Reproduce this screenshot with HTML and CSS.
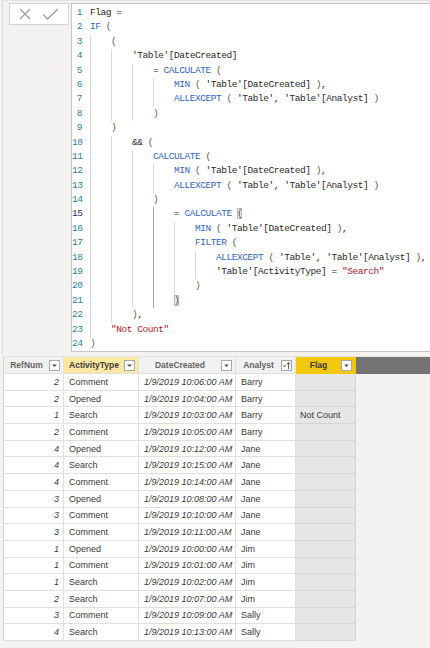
FILE: index.html
```html
<!DOCTYPE html>
<html>
<head>
<meta charset="utf-8">
<link rel="stylesheet" href="styles.css">
</head>
<body>
<div class="top">
  <div class="icons">
    <svg width="12" height="12" viewBox="0 0 12 12" class="ic-x"><path d="M1 1 L11 11 M11 1 L1 11" stroke="#9c9c9c" stroke-width="1.3" fill="none"/></svg>
    <svg width="17" height="12" viewBox="0 0 17 12" class="ic-ok"><path d="M1 6.5 L5.5 11 L16 1" stroke="#9c9c9c" stroke-width="1.3" fill="none"/></svg>
  </div>
  <div class="editor">
    <div class="ln"><span class="n">1</span><span class="c">Flag =</span></div>
    <div class="ln"><span class="n">2</span><span class="c"><span class="k">IF</span> <span class="p">(</span></span></div>
    <div class="ln"><span class="n">3</span><span class="c"><i class="g"></i><span class="p">(</span></span></div>
    <div class="ln"><span class="n">4</span><span class="c"><i class="g"></i><i class="g"></i>'Table'[DateCreated]</span></div>
    <div class="ln"><span class="n">5</span><span class="c"><i class="g"></i><i class="g"></i><i class="g"></i>= <span class="k">CALCULATE</span> <span class="p">(</span></span></div>
    <div class="ln"><span class="n">6</span><span class="c"><i class="g"></i><i class="g"></i><i class="g"></i><i class="g"></i><span class="k">MIN</span> <span class="p">(</span> 'Table'[DateCreated] <span class="p">)</span>,</span></div>
    <div class="ln"><span class="n">7</span><span class="c"><i class="g"></i><i class="g"></i><i class="g"></i><i class="g"></i><span class="k">ALLEXCEPT</span> <span class="p">(</span> 'Table', 'Table'[Analyst] <span class="p">)</span></span></div>
    <div class="ln"><span class="n">8</span><span class="c"><i class="g"></i><i class="g"></i><i class="g"></i><span class="p">)</span></span></div>
    <div class="ln"><span class="n">9</span><span class="c"><i class="g"></i><span class="p">)</span></span></div>
    <div class="ln"><span class="n">10</span><span class="c"><i class="g"></i><i class="g"></i>&amp;&amp; <span class="p">(</span></span></div>
    <div class="ln"><span class="n">11</span><span class="c"><i class="g"></i><i class="g"></i><i class="g"></i><span class="k">CALCULATE</span> <span class="p">(</span></span></div>
    <div class="ln"><span class="n">12</span><span class="c"><i class="g"></i><i class="g"></i><i class="g"></i><i class="g"></i><span class="k">MIN</span> <span class="p">(</span> 'Table'[DateCreated] <span class="p">)</span>,</span></div>
    <div class="ln"><span class="n">13</span><span class="c"><i class="g"></i><i class="g"></i><i class="g"></i><i class="g"></i><span class="k">ALLEXCEPT</span> <span class="p">(</span> 'Table', 'Table'[Analyst] <span class="p">)</span></span></div>
    <div class="ln"><span class="n">14</span><span class="c"><i class="g"></i><i class="g"></i><i class="g"></i><span class="p">)</span></span></div>
    <div class="ln cur"><span class="n">15</span><span class="c"><i class="g"></i><i class="g"></i><i class="g"></i><i class="g ga"></i>= <span class="k">CALCULATE</span> <span class="bm">(</span></span></div>
    <div class="ln"><span class="n">16</span><span class="c"><i class="g"></i><i class="g"></i><i class="g"></i><i class="g ga"></i><i class="g"></i><span class="k">MIN</span> <span class="p">(</span> 'Table'[DateCreated] <span class="p">)</span>,</span></div>
    <div class="ln"><span class="n">17</span><span class="c"><i class="g"></i><i class="g"></i><i class="g"></i><i class="g ga"></i><i class="g"></i><span class="k">FILTER</span> <span class="p">(</span></span></div>
    <div class="ln"><span class="n">18</span><span class="c"><i class="g"></i><i class="g"></i><i class="g"></i><i class="g ga"></i><i class="g"></i><i class="g"></i><span class="k">ALLEXCEPT</span> <span class="p">(</span> 'Table', 'Table'[Analyst] <span class="p">)</span>,</span></div>
    <div class="ln"><span class="n">19</span><span class="c"><i class="g"></i><i class="g"></i><i class="g"></i><i class="g ga"></i><i class="g"></i><i class="g"></i>'Table'[ActivityType] = <span class="s">"Search"</span></span></div>
    <div class="ln"><span class="n">20</span><span class="c"><i class="g"></i><i class="g"></i><i class="g"></i><i class="g ga"></i><i class="g"></i><span class="p">)</span></span></div>
    <div class="ln"><span class="n">21</span><span class="c"><i class="g"></i><i class="g"></i><i class="g"></i><i class="g ga"></i><span class="bm">)</span></span></div>
    <div class="ln"><span class="n">22</span><span class="c"><i class="g"></i><i class="g"></i><span class="p">)</span>,</span></div>
    <div class="ln"><span class="n">23</span><span class="c"><i class="g"></i><span class="s">"Not Count"</span></span></div>
    <div class="ln"><span class="n">24</span><span class="c"><span class="p">)</span></span></div>
  </div>
</div>

<div class="table">
  <div class="row head">
    <div class="hc w1"><span class="ht">RefNum</span><span class="dd"><svg width="9" height="9" viewBox="0 0 9 9"><path d="M2 3.5 H7 L4.5 6 Z" fill="#555"/></svg></span></div>
    <div class="hc w2 sel"><span class="ht">ActivityType</span><span class="dd"><svg width="9" height="9" viewBox="0 0 9 9"><path d="M2 3.5 H7 L4.5 6 Z" fill="#555"/></svg></span></div>
    <div class="hc w3"><span class="ht">DateCreated</span><span class="dd"><svg width="9" height="9" viewBox="0 0 9 9"><path d="M2 3.5 H7 L4.5 6 Z" fill="#555"/></svg></span></div>
    <div class="hc w4"><span class="ht">Analyst</span><span class="dd"><svg width="9" height="9" viewBox="0 0 9 9"><path d="M0.8 4.5 H4 L2.4 6.2 Z" fill="#555"/><path d="M6.5 8 V1.5 M4.8 3.3 L6.5 1.5 L8.2 3.3" stroke="#555" stroke-width="0.9" fill="none"/></svg></span></div>
    <div class="hc w5 flag"><span class="ht">Flag</span><span class="dd"><svg width="9" height="9" viewBox="0 0 9 9"><path d="M2 3.5 H7 L4.5 6 Z" fill="#555"/></svg></span></div>
    <div class="fill"></div>
  </div>
  <div class="row"><div class="cl w1 num">2</div><div class="cl w2">Comment</div><div class="cl w3 dt">1/9/2019 10:06:00 AM</div><div class="cl w4">Barry</div><div class="cl w5 fl"></div></div>
  <div class="row"><div class="cl w1 num">2</div><div class="cl w2">Opened</div><div class="cl w3 dt">1/9/2019 10:04:00 AM</div><div class="cl w4">Barry</div><div class="cl w5 fl"></div></div>
  <div class="row"><div class="cl w1 num">1</div><div class="cl w2">Search</div><div class="cl w3 dt">1/9/2019 10:03:00 AM</div><div class="cl w4">Barry</div><div class="cl w5 fl">Not Count</div></div>
  <div class="row"><div class="cl w1 num">2</div><div class="cl w2">Comment</div><div class="cl w3 dt">1/9/2019 10:05:00 AM</div><div class="cl w4">Barry</div><div class="cl w5 fl"></div></div>
  <div class="row"><div class="cl w1 num">4</div><div class="cl w2">Opened</div><div class="cl w3 dt">1/9/2019 10:12:00 AM</div><div class="cl w4">Jane</div><div class="cl w5 fl"></div></div>
  <div class="row"><div class="cl w1 num">4</div><div class="cl w2">Search</div><div class="cl w3 dt">1/9/2019 10:15:00 AM</div><div class="cl w4">Jane</div><div class="cl w5 fl"></div></div>
  <div class="row"><div class="cl w1 num">4</div><div class="cl w2">Comment</div><div class="cl w3 dt">1/9/2019 10:14:00 AM</div><div class="cl w4">Jane</div><div class="cl w5 fl"></div></div>
  <div class="row"><div class="cl w1 num">3</div><div class="cl w2">Opened</div><div class="cl w3 dt">1/9/2019 10:08:00 AM</div><div class="cl w4">Jane</div><div class="cl w5 fl"></div></div>
  <div class="row"><div class="cl w1 num">3</div><div class="cl w2">Comment</div><div class="cl w3 dt">1/9/2019 10:10:00 AM</div><div class="cl w4">Jane</div><div class="cl w5 fl"></div></div>
  <div class="row"><div class="cl w1 num">3</div><div class="cl w2">Comment</div><div class="cl w3 dt">1/9/2019 10:11:00 AM</div><div class="cl w4">Jane</div><div class="cl w5 fl"></div></div>
  <div class="row"><div class="cl w1 num">1</div><div class="cl w2">Opened</div><div class="cl w3 dt">1/9/2019 10:00:00 AM</div><div class="cl w4">Jim</div><div class="cl w5 fl"></div></div>
  <div class="row"><div class="cl w1 num">1</div><div class="cl w2">Comment</div><div class="cl w3 dt">1/9/2019 10:01:00 AM</div><div class="cl w4">Jim</div><div class="cl w5 fl"></div></div>
  <div class="row"><div class="cl w1 num">1</div><div class="cl w2">Search</div><div class="cl w3 dt">1/9/2019 10:02:00 AM</div><div class="cl w4">Jim</div><div class="cl w5 fl"></div></div>
  <div class="row"><div class="cl w1 num">2</div><div class="cl w2">Search</div><div class="cl w3 dt">1/9/2019 10:07:00 AM</div><div class="cl w4">Jim</div><div class="cl w5 fl"></div></div>
  <div class="row"><div class="cl w1 num">3</div><div class="cl w2">Comment</div><div class="cl w3 dt">1/9/2019 10:09:00 AM</div><div class="cl w4">Sally</div><div class="cl w5 fl"></div></div>
  <div class="row"><div class="cl w1 num">4</div><div class="cl w2">Search</div><div class="cl w3 dt">1/9/2019 10:13:00 AM</div><div class="cl w4">Sally</div><div class="cl w5 fl"></div></div>
</div>
</body>
</html>
```
FILE: styles.css
```css
html, body {
  margin: 0;
  padding: 0;
  background: #f3f2f1;
  width: 430px;
  height: 648px;
  overflow: hidden;
  font-family: "Liberation Sans", Arial, sans-serif;
}

.top {
  display: flex;
  gap: 2px;
  height: 353px;
  box-sizing: border-box;
  padding: 2px 0 0 6px;
  margin-left: 2px;
  border-left: 1px solid #dcdcdc;
  border-top: 1px solid #e2e2e2;
}

.icons {
  width: 60px;
  height: 22px;
  box-sizing: border-box;
  background: #fff;
  border: 1px solid #d4d4d4;
  display: flex;
  align-items: center;
  padding-left: 9px;
  gap: 11px;
}

.ic-x { margin-top: 0; }

.editor {
  flex: 1;
  height: 349px;
  box-sizing: border-box;
  background: #fff;
  border: 1px solid #c6c6c6;
  border-right: none;
  padding-top: 2px;
  font-family: "Liberation Mono", "DejaVu Sans Mono", monospace;
  font-size: 9.5px;
  color: #2a2a2a;
}

.ln {
  display: flex;
  height: 14.4px;
  line-height: 14.4px;
  white-space: pre;
}

.n {
  width: 10px;
  text-align: right;
  color: #2b7f9e;
  letter-spacing: -0.45px;
  flex: none;
}

.cur .n { color: #1f2f6e; }

.c {
  padding-left: 8px;
  letter-spacing: -0.45px;
}

.g {
  display: inline-block;
  width: 21px;
  height: 14.4px;
  box-sizing: border-box;
  border-left: 1px solid #dadada;
  vertical-align: top;
}

.ga { border-left-color: #a6a6a6; }

.k { color: #3466c0; }
.s { color: #a8232b; }
.p { color: #5a5a4a; }

.bm {
  color: #4a4a4a;
  background: #ececec;
  outline: 1px solid #b8b8b8;
  outline-offset: -1px;
}

/* table */
.table {
  margin: 3px 0 0 3px;
  border-left: 1px solid #d4d4d4;
  font-size: 9px;
  color: #3a3a3a;
}

.row {
  display: flex;
  height: 16.7px;
}

.row.head {
  height: 17px;
  border-top: 1px solid #e4e4e4;
}

.w1 { width: 60px; }
.w2 { width: 75px; }
.w3 { width: 97px; }
.w4 { width: 60px; }
.w5 { width: 60px; }

.hc {
  box-sizing: border-box;
  display: flex;
  align-items: center;
  background: #f1f1f1;
  border-right: 1px solid #e2e2e2;
  border-bottom: 1px solid #e2e2e2;
  padding-right: 3px;
}

.ht {
  flex: 1;
  text-align: center;
  font-weight: bold;
  font-size: 8.5px;
  color: #666;
}

.hc.sel { background: #fce8a4; }
.hc.sel .ht { color: #3b3a39; }
.hc.flag { background: #f2c80f; border-color: #f2c80f; }
.hc.flag .ht { color: #3b3a39; }

.dd {
  width: 11px;
  height: 11px;
  box-sizing: border-box;
  border: 1px solid #a8a8a8;
  background: #fff;
  display: flex;
  align-items: center;
  justify-content: center;
}

.fill {
  flex: 1;
  background: #737373;
}

.cl {
  box-sizing: border-box;
  background: #fff;
  border-right: 1px solid #e0e0e0;
  border-bottom: 1px solid #e0e0e0;
  display: flex;
  align-items: center;
  padding-left: 5px;
  white-space: nowrap;
  overflow: hidden;
}

.num {
  justify-content: flex-end;
  padding-right: 4px;
  font-style: italic;
}

.dt {
  font-style: italic;
  padding-left: 5px;
}

.fl {
  background: #e6e6e6;
  border-color: #d6d6d6;
  padding-left: 4px;
}
```
